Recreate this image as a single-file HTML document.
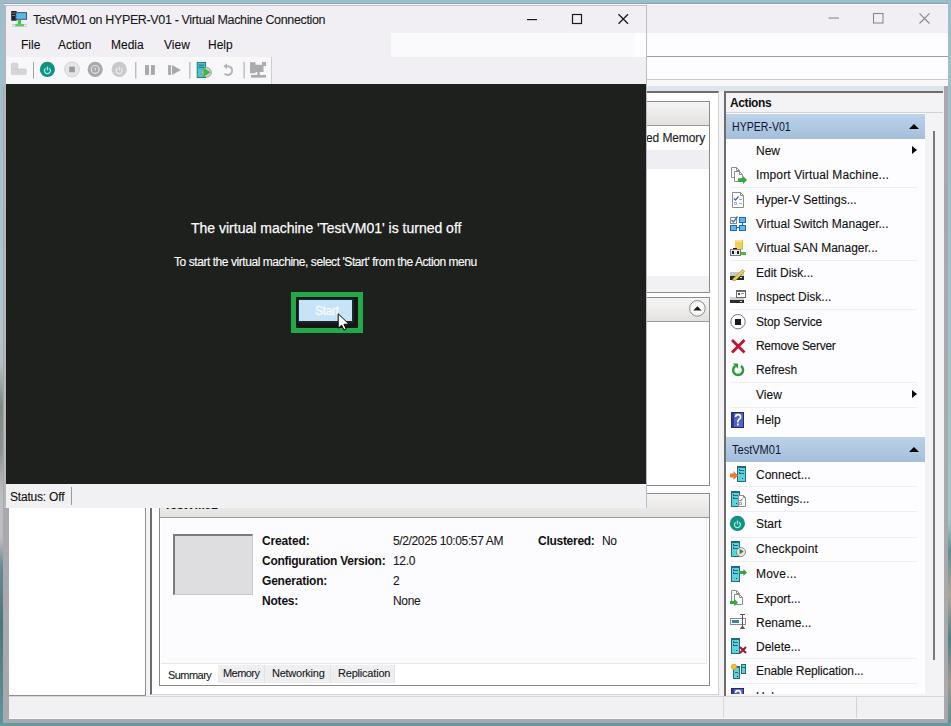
<!DOCTYPE html>
<html><head><meta charset="utf-8">
<style>
*{margin:0;padding:0;box-sizing:border-box}
html,body{width:951px;height:726px;overflow:hidden;background:#6f9aa3;font-family:"Liberation Sans",sans-serif;color:#000}
.a{position:absolute}
.t{position:absolute;white-space:nowrap;font-size:12px;line-height:14px;color:#111;-webkit-text-stroke:0.1px currentColor}
#desk-top{left:0;top:0;width:951px;height:8px;background:#9dbdcd}
#desk-left{left:0;top:0;width:4px;height:726px;background:linear-gradient(#9dbdcd 0%,#aac6d4 40%,#b4c0c4 50%,#7d8a80 56%,#8a9490 62%,#bcbec0 68%,#c2bcc0 74%,#6a8a94 78%,#4a7482 86%,#5e96a0 100%)}
#desk-right{left:948px;top:0;width:3px;height:726px;background:linear-gradient(#9dbdcd 0%,#a6c2d0 72%,#5e9098 76%,#b0a890 82%,#4e8088 88%,#a09a88 94%,#5a9098 100%)}
#desk-bot{left:0;top:723px;width:951px;height:3px;background:#5e9aa0}
#bw{left:3px;top:86px;width:945px;height:637px;background:#a9a8ac}
#bw-title{left:4px;top:3px;width:944px;height:30px;background:#f1eff4;border-top:1px solid #8fa2ae;box-shadow:inset 0 1px 0 #fbfbfd}
#bw-menu{left:4px;top:33px;width:944px;height:24px;background:#fdfcfe;border-bottom:1px solid #a0a0a2}
#bw-tool{left:4px;top:57px;width:944px;height:23px;background:#fdfcfe;border-bottom:1px solid #c8c8ca}
#bw-strip{left:4px;top:80px;width:944px;height:6px;background:#f8f7fa}
#bw-body{left:9px;top:86px;width:935px;height:610px;background:linear-gradient(#dde5ee 0px,#dde5ee 5px,#f3f2f5 5px)}
#bw-status{left:9px;top:696px;width:935px;height:23px;background:#f1f0f3;border-top:1px solid #d6d6d6;border-bottom:1px solid #fafafa}
#tree{left:9px;top:91px;width:137px;height:605px;background:#fff;border-right:1px solid #8f8f8f;border-bottom:1px solid #8f8f8f}
#mid{left:150px;top:91px;width:569px;height:604px;background:#fff;border-left:2px solid #6d6d6d;border-top:2px solid #6d6d6d;border-right:1px solid #d4d4d6;border-bottom:1px solid #d4d4d6}
.pane{position:absolute;background:#fff;border:1px solid #8c8c8c}
.phead{position:absolute;left:0;top:0;right:0;height:24px;background:linear-gradient(#f6f5f5,#e4e2df);border-bottom:1px solid #9c9c9c}
#actions{left:724px;top:91px;width:219px;height:605px;background:#f3f2f5;border-left:2px solid #6d6d6d;border-top:2px solid #6d6d6d}
.ahead{left:726px;width:199px;height:25px;background:linear-gradient(#bcd2ea,#a4bedb)}
.tri-up{width:0;height:0;border-left:5px solid transparent;border-right:5px solid transparent;border-bottom:5px solid #000}
.tri-r{width:0;height:0;border-top:4.5px solid transparent;border-bottom:4.5px solid transparent;border-left:5px solid #000}
.sep{left:731px;width:186px;height:1px;background:#eeeef0}
.b{font-weight:bold;color:#111;-webkit-text-stroke:0}
.v{color:#1a1a1a}
.tab{font-size:11px;color:#1a1a1a}
</style></head><body>
<div class="a" id="desk-top"></div>
<div class="a" id="desk-left"></div>
<div class="a" id="desk-right"></div>
<div class="a" id="desk-bot"></div>
<div class="a" id="bw"></div>
<div class="a" id="bw-title"></div>
<div class="a" id="bw-menu"></div>
<div class="a" id="bw-tool"></div>
<div class="a" id="bw-strip"></div>
<div class="a" id="bw-body"></div>
<div class="a" id="bw-status"></div>
<svg class="a" style="left:820px;top:8px" width="120" height="22">
  <rect x="8.5" y="9.5" width="10.5" height="1.1" fill="#8a8a8c"/>
  <rect x="53.5" y="5.5" width="9.5" height="9.5" fill="none" stroke="#8a8a8c" stroke-width="1.1"/>
  <path d="M99.5 5.3 L109.5 15.5 M109.5 5.3 L99.5 15.5" stroke="#8a8a8c" stroke-width="1.2"/>
</svg>
<div class="a" style="left:723px;top:697px;width:1px;height:21px;background:#d8d8da"></div>
<div class="a" style="left:856px;top:697px;width:1px;height:21px;background:#d4d4d6"></div>
<div class="a" id="tree"></div>
<div class="a" id="mid">
  <!-- table pane -->
  <div class="pane" style="left:-2px;top:8px;width:560px;height:192px">
    <div class="phead"></div>
  </div>
  <!-- checkpoint pane -->
  <div class="pane" style="left:-2px;top:204px;width:560px;height:189px">
    <div class="phead"></div>
  </div>
  <!-- details pane -->
  <div class="pane" style="left:7px;top:400px;width:551px;height:193px">
    <div class="phead"></div>
  </div>
</div>
<div class="a" id="actions"></div>
<div class="t" style="left:646px;top:131px;letter-spacing:-0.1px;color:#1a1a1a">ed Memory</div>
<div class="a" style="left:620px;top:150px;width:89px;height:19px;background:#efeef2"></div>
<div class="a" style="left:620px;top:276px;width:89px;height:16px;background:#f1f0f3"></div>
<svg class="a" style="left:687px;top:298px" width="20" height="22"><circle cx="10.4" cy="10.4" r="7.8" fill="#fafafa" stroke="#7a7a7a" stroke-width="0.9"/><path d="M6.2 12.4 L10.4 8.2 L14.6 12.4 Z" fill="#1a1a1a"/></svg>
<div class="t" style="left:164px;top:498px;font-weight:bold;letter-spacing:-0.2px">TestVM01</div>
<div class="a" style="left:161px;top:518px;width:546px;height:146px;background:#fcfbfd;border-bottom:1px solid #e6e6e8;border-right:1px solid #ececee"></div>
<div class="a" style="left:173px;top:534px;width:80px;height:61px;background:#dedddf;border-top:2px solid #7c7c7e;border-left:2px solid #7c7c7e;border-right:1px solid #c8c8ca;border-bottom:1px solid #c8c8ca"></div>
<div class="t b" style="left:262px;top:534px;letter-spacing:-0.15px">Created:</div>
<div class="t b" style="left:262px;top:554px;letter-spacing:-0.27px">Configuration Version:</div>
<div class="t b" style="left:262px;top:574px;letter-spacing:-0.2px">Generation:</div>
<div class="t b" style="left:262px;top:594px;letter-spacing:-0.2px">Notes:</div>
<div class="t v" style="left:393px;top:534px;letter-spacing:-0.37px">5/2/2025 10:05:57 AM</div>
<div class="t v" style="left:393px;top:554px;letter-spacing:-0.3px">12.0</div>
<div class="t v" style="left:393px;top:574px">2</div>
<div class="t v" style="left:393px;top:594px;letter-spacing:-0.3px">None</div>
<div class="t b" style="left:538px;top:534px;letter-spacing:-0.28px">Clustered:</div>
<div class="t v" style="left:602px;top:534px;letter-spacing:-0.3px">No</div>
<div class="a" style="left:218px;top:665px;width:47px;height:18px;background:#efeef1;border-right:1px solid #e2e2e4"></div>
<div class="a" style="left:265px;top:665px;width:66px;height:18px;background:#efeef1;border-right:1px solid #e2e2e4"></div>
<div class="a" style="left:331px;top:665px;width:64px;height:18px;background:#efeef1;border-right:1px solid #e2e2e4"></div>
<div class="t tab" style="left:168px;top:668px;letter-spacing:-0.55px">Summary</div>
<div class="t tab" style="left:223px;top:666px;letter-spacing:-0.55px">Memory</div>
<div class="t tab" style="left:272px;top:666px;letter-spacing:-0.25px">Networking</div>
<div class="t tab" style="left:338px;top:666px;letter-spacing:-0.2px">Replication</div>
<div class="a" style="left:726px;top:93px;width:217px;height:20px;background:#f3f2f5;border-bottom:1px solid #d2d2d2"></div>
<div class="t" style="left:730px;top:96px;font-weight:bold;letter-spacing:-0.4px;-webkit-text-stroke:0">Actions</div>
<div class="a" id="alist" style="left:726px;top:113px;width:199px;height:581px;background:#fdfcfe;overflow:hidden"></div>
<div class="a" style="left:933px;top:131px;width:2px;height:529px;background:#7a7a7a"></div>
<div class="a ahead" style="top:114px"></div>
<div class="t" style="left:732px;top:120px;transform:scaleX(0.88);transform-origin:0 0;-webkit-text-stroke:0;color:#0c1830">HYPER-V01</div>
<div class="a tri-up" style="left:909px;top:124px"></div>
<div class="a ahead" style="top:437px"></div>
<div class="t" style="left:732px;top:443px;transform:scaleX(0.92);transform-origin:0 0;-webkit-text-stroke:0;color:#0c1830">TestVM01</div>
<div class="a tri-up" style="left:909px;top:447px"></div>
<div class="a tri-r" style="left:912px;top:146px"></div>
<div class="a tri-r" style="left:912px;top:390px"></div>
<!--ICONSVG--><svg class="a" style="left:726px;top:113px" width="24" height="581" viewBox="726 113 24 581"><path d="M731.5 167.5 H736.5 L739.5 170.5 V177.5 H731.5 Z" fill="#fff" stroke="#8c8c8c" stroke-width="1"/><path d="M736.5 167.5 V170.5 H739.5" fill="none" stroke="#8c8c8c" stroke-width="1"/><path d="M734.5 171.5 H739.5 L742.5 174.5 V181.5 H734.5 Z" fill="#fff" stroke="#8c8c8c" stroke-width="1"/><path d="M739.5 171.5 V174.5 H742.5" fill="none" stroke="#8c8c8c" stroke-width="1"/><path d="M738 178.24 H743.0 V176 L747 180.0 L743.0 184 V181.76 H738 Z" fill="#2faa3c"/><path d="M732.5 192.5 H740.5 L743.5 195.5 V207.5 H732.5 Z" fill="#fff" stroke="#8c8c8c" stroke-width="1"/><path d="M740.5 192.5 V195.5 H743.5" fill="none" stroke="#8c8c8c" stroke-width="1"/><path d="M734 198.5 L735.5 200 L738.5 196.5" fill="none" stroke="#3566b8" stroke-width="1.2"/><rect x="739" y="199" width="3" height="1" fill="#a8a8a8" /><rect x="734.5" y="202.5" width="2" height="2" fill="none" stroke="#b4b4b4" stroke-width="1"/><rect x="739" y="203" width="3" height="1" fill="#a8a8a8" /><rect x="730.5" y="217.5" width="6" height="6" fill="#fff" stroke="#8c8c8c" stroke-width="1"/><path d="M731.5 220 L733.5 222 L737.5 216.5" fill="none" stroke="#3270c0" stroke-width="1.3"/><rect x="739.5" y="217.5" width="6" height="5" fill="#5ab8f2" stroke="#1e6ab4" stroke-width="1"/><rect x="730.5" y="225.5" width="6" height="5" fill="#5ab8f2" stroke="#1e6ab4" stroke-width="1"/><rect x="739.5" y="225.5" width="6" height="5" fill="#5ab8f2" stroke="#1e6ab4" stroke-width="1"/><rect x="742" y="223" width="1" height="2" fill="#1e6ab4" /><rect x="737" y="227" width="2" height="1" fill="#1e6ab4" /><rect x="735" y="240" width="8" height="10" fill="#f0d058" /><rect x="735" y="240" width="8" height="2" fill="#f8e490" /><rect x="742" y="240" width="1" height="10" fill="#d8b840" /><rect x="730.5" y="249.5" width="10" height="6" fill="#e8e8e8" stroke="#7a7a7a" stroke-width="1"/><rect x="732" y="251" width="2" height="3" fill="#1a1a1a" /><rect x="737" y="251" width="2" height="3" fill="#1a1a1a" /><rect x="733" y="248" width="4" height="1" fill="#1a1a1a" /><rect x="741" y="252" width="5" height="3" fill="#48b848" /><rect x="730" y="272" width="14" height="4" fill="#c8c8c8" /><rect x="730" y="276" width="14" height="4" fill="#2a2a2a" /><rect x="740" y="277" width="2" height="1" fill="#e0f0d0" /><path d="M732.6 280.4 L735.4 280.6 L744.6 271.4 L742.6 269.4 L733.2 278.6 Z" fill="#e8c860" stroke="#a88a30" stroke-width="0.6"/><rect x="730" y="297" width="14" height="3" fill="#cfcfcf" /><rect x="730" y="300" width="14" height="3" fill="#2a2a2a" /><rect x="740" y="301" width="2" height="1" fill="#e8e8e8" /><rect x="736.5" y="290.5" width="9" height="7" fill="#fff" stroke="#6a6a6a" stroke-width="1"/><rect x="736" y="290" width="10" height="2" fill="#6a6a6a" /><rect x="738" y="293" width="2" height="2" fill="#444" /><rect x="741" y="293" width="3" height="1" fill="#888" /><circle cx="738" cy="321.7" r="7.2" fill="#fff" stroke="#7a7a7a" stroke-width="1"/><rect x="735" y="319" width="6" height="6" fill="#1a1a1a" /><path d="M732 340 L744.5 352.5 M744.5 340 L732 352.5" stroke="#c8102e" stroke-width="2.8"/><path d="M735.3 365.9 A5 5 0 1 0 740.9 365.9" fill="none" stroke="#2a9a3a" stroke-width="2.4"/><path d="M732.8 363.6 L738 363.6 L738 368.8 Z" fill="#2a9a3a"/><rect x="731" y="412" width="13" height="16" fill="#5464c4"/><rect x="731" y="412" width="3" height="16" fill="#2c3a94"/><rect x="731.5" y="412.5" width="12" height="15" fill="none" stroke="#202a70" stroke-width="1"/><path d="M735.6 417 Q735.6 414.6 738 414.6 Q740.6 414.6 740.6 417 Q740.6 418.6 738.6 419.8 Q737.8 420.4 737.8 422.4" fill="none" stroke="#fff" stroke-width="1.6"/><rect x="737" y="423.6" width="1.8" height="1.8" fill="#fff"/><rect x="737.5" y="466.5" width="8" height="15" fill="#5fd0e0" stroke="#1d6d7a" stroke-width="1"/><rect x="737" y="466" width="9" height="2" fill="#1d6d7a" /><rect x="739" y="470" width="5" height="1" fill="#1d6d7a" /><rect x="739" y="469" width="1" height="1" fill="#1d6d7a" /><rect x="739" y="473" width="5" height="1" fill="#1d6d7a" /><rect x="739" y="472" width="1" height="1" fill="#1d6d7a" /><rect x="742" y="478" width="1" height="1" fill="#0e3a40" /><path d="M730 473.52 H733.5 V471 L738 475.5 L733.5 480 V477.48 H730 Z" fill="#e8782a"/><rect x="731.5" y="491.5" width="8" height="15" fill="#5fd0e0" stroke="#1d6d7a" stroke-width="1"/><rect x="731" y="491" width="9" height="2" fill="#1d6d7a" /><rect x="733" y="495" width="5" height="1" fill="#1d6d7a" /><rect x="733" y="494" width="1" height="1" fill="#1d6d7a" /><rect x="733" y="498" width="5" height="1" fill="#1d6d7a" /><rect x="733" y="497" width="1" height="1" fill="#1d6d7a" /><rect x="736" y="503" width="1" height="1" fill="#0e3a40" /><path d="M738.5 495.5 H743.5 L745.5 497.5 V506.5 H738.5 Z" fill="#fff" stroke="#8c8c8c" stroke-width="1"/><path d="M743.5 495.5 V497.5 H745.5" fill="none" stroke="#8c8c8c" stroke-width="1"/><path d="M739.5 500 L740.6 501.2 L742.6 498.6" fill="none" stroke="#3060b0" stroke-width="1"/><rect x="739.5" y="502.5" width="2" height="2" fill="none" stroke="#b0b0b0" stroke-width="1"/><circle cx="737.4" cy="523.4" r="7.6" fill="#17917f"/><path d="M735.6 522.2 A3 3 0 1 0 739.2 522.2" fill="none" stroke="#8ef6ec" stroke-width="1.3"/><rect x="736.8" y="520.6" width="1.3" height="3.8" fill="#8ef6ec" /><rect x="731.5" y="541.5" width="8" height="15" fill="#5fd0e0" stroke="#1d6d7a" stroke-width="1"/><rect x="731" y="541" width="9" height="2" fill="#1d6d7a" /><rect x="733" y="545" width="5" height="1" fill="#1d6d7a" /><rect x="733" y="544" width="1" height="1" fill="#1d6d7a" /><rect x="733" y="548" width="5" height="1" fill="#1d6d7a" /><rect x="733" y="547" width="1" height="1" fill="#1d6d7a" /><rect x="736" y="553" width="1" height="1" fill="#0e3a40" /><circle cx="741" cy="552" r="4.5" fill="#e4e4e4" stroke="#8a8a8a" stroke-width="0.9"/><path d="M739.6 549 L743.6 551.6 L739.6 554.2 Z" fill="#2a8a2a"/><rect x="731.5" y="566.5" width="8" height="15" fill="#5fd0e0" stroke="#1d6d7a" stroke-width="1"/><rect x="731" y="566" width="9" height="2" fill="#1d6d7a" /><rect x="733" y="570" width="5" height="1" fill="#1d6d7a" /><rect x="733" y="569" width="1" height="1" fill="#1d6d7a" /><rect x="733" y="573" width="5" height="1" fill="#1d6d7a" /><rect x="733" y="572" width="1" height="1" fill="#1d6d7a" /><rect x="736" y="578" width="1" height="1" fill="#0e3a40" /><path d="M739 570.96 H743.5 V569 L747 572.5 L743.5 576 V574.04 H739 Z" fill="#2faa3c"/><path d="M731.5 590.5 H736.5 L739.5 593.5 V601.5 H731.5 Z" fill="#fff" stroke="#8c8c8c" stroke-width="1"/><path d="M736.5 590.5 V593.5 H739.5" fill="none" stroke="#8c8c8c" stroke-width="1"/><path d="M734.5 594.5 H739.5 L742.5 597.5 V604.5 H734.5 Z" fill="#fff" stroke="#8c8c8c" stroke-width="1"/><path d="M739.5 594.5 V597.5 H742.5" fill="none" stroke="#8c8c8c" stroke-width="1"/><path d="M730 600.96 H734.5 V599 L738 602.5 L734.5 606 V604.04 H730 Z" fill="#2faa3c"/><rect x="730.5" y="618.5" width="15" height="6" fill="#fff" stroke="#8c8c8c" stroke-width="1"/><rect x="732" y="620" width="7" height="3" fill="#3a7cc8" /><rect x="742" y="615" width="1" height="12" fill="#555" /><rect x="740" y="614" width="5" height="1" fill="#555" /><path d="M739.8 629 L742.5 625.6 L745.2 629 Z" fill="#555"/><rect x="731.5" y="638.5" width="8" height="15" fill="#5fd0e0" stroke="#1d6d7a" stroke-width="1"/><rect x="731" y="638" width="9" height="2" fill="#1d6d7a" /><rect x="733" y="642" width="5" height="1" fill="#1d6d7a" /><rect x="733" y="641" width="1" height="1" fill="#1d6d7a" /><rect x="733" y="645" width="5" height="1" fill="#1d6d7a" /><rect x="733" y="644" width="1" height="1" fill="#1d6d7a" /><rect x="736" y="650" width="1" height="1" fill="#0e3a40" /><path d="M740 647 L746 653 M746 647 L740 653" stroke="#a01424" stroke-width="2"/><rect x="733.5" y="666.5" width="6" height="12" fill="#5fd0e0" stroke="#1d6d7a" stroke-width="1"/><rect x="733" y="666" width="7" height="2" fill="#1d6d7a" /><rect x="735" y="672" width="3" height="1" fill="#1d6d7a" /><rect x="737" y="676" width="1" height="1" fill="#0e3a40" /><rect x="741.5" y="664.5" width="4" height="9" fill="#5fd0e0" stroke="#1d6d7a" stroke-width="1"/><rect x="742" y="667" width="3" height="1" fill="#1d6d7a" /><circle cx="734" cy="666.8" r="2.7" fill="#f2c030" stroke="#d09a10" stroke-width="0.6"/><rect x="731" y="688" width="13" height="16" fill="#5464c4"/><rect x="731" y="688" width="3" height="16" fill="#2c3a94"/><rect x="731.5" y="688.5" width="12" height="15" fill="none" stroke="#202a70" stroke-width="1"/><path d="M735.6 693 Q735.6 690.6 738 690.6 Q740.6 690.6 740.6 693 Q740.6 694.6 738.6 695.8 Q737.8 696.4 737.8 698.4" fill="none" stroke="#fff" stroke-width="1.6"/><rect x="737" y="699.6" width="1.8" height="1.8" fill="#fff"/></svg>
<div id="acl" class="a" style="left:0;top:0;width:951px;height:694px;overflow:hidden">
<div class="t" style="left:756px;top:144px">New</div>
<div class="t" style="left:756px;top:168px;letter-spacing:0.12px">Import Virtual Machine...</div>
<div class="t" style="left:756px;top:193px">Hyper-V Settings...</div>
<div class="t" style="left:756px;top:217px">Virtual Switch Manager...</div>
<div class="t" style="left:756px;top:241px">Virtual SAN Manager...</div>
<div class="t" style="left:756px;top:266px">Edit Disk...</div>
<div class="t" style="left:756px;top:290px">Inspect Disk...</div>
<div class="t" style="left:756px;top:315px;letter-spacing:-0.17px">Stop Service</div>
<div class="t" style="left:756px;top:339px;letter-spacing:-0.3px">Remove Server</div>
<div class="t" style="left:756px;top:363px;letter-spacing:-0.15px">Refresh</div>
<div class="t" style="left:756px;top:388px">View</div>
<div class="t" style="left:756px;top:413px">Help</div>
<div class="t" style="left:756px;top:468px">Connect...</div>
<div class="t" style="left:756px;top:492px">Settings...</div>
<div class="t" style="left:756px;top:517px">Start</div>
<div class="t" style="left:756px;top:542px;letter-spacing:0.2px">Checkpoint</div>
<div class="t" style="left:756px;top:567px;letter-spacing:0.2px">Move...</div>
<div class="t" style="left:756px;top:592px">Export...</div>
<div class="t" style="left:756px;top:616px">Rename...</div>
<div class="t" style="left:756px;top:640px">Delete...</div>
<div class="t" style="left:756px;top:664px;letter-spacing:-0.12px">Enable Replication...</div>
<div class="t" style="left:756px;top:690px">Help</div>
<div class="a sep" style="top:187px"></div>
<div class="a sep" style="top:260px"></div>
<div class="a sep" style="top:309px"></div>
<div class="a sep" style="top:382px"></div>
<div class="a sep" style="top:407px"></div>
<div class="a sep" style="top:486px"></div>
<div class="a sep" style="top:511px"></div>
<div class="a sep" style="top:537px"></div>
<div class="a sep" style="top:561px"></div>
<div class="a sep" style="top:658px"></div>
<div class="a sep" style="top:683px"></div>
</div>
<div class="a" id="vm" style="left:4px;top:5px;width:643px;height:503px;background:#f1eff4;border:1px solid #b9bec6;border-left:2px solid #b4b6ba;border-bottom-color:#c8c8cc"></div>
<div class="a" style="left:391px;top:33px;width:255px;height:24px;background:linear-gradient(90deg,#faf9fc 0,#faf9fc 244px,#fefefe 244px)"></div>
<div class="a" style="left:6px;top:57px;width:266px;height:27px;background:#f8f7fa;border-right:1px solid #d4d4d6"></div>
<svg class="a" style="left:10px;top:10px" width="20" height="18" viewBox="0 0 20 18">
  <rect x="1.2" y="1" width="5.5" height="9.7" fill="#222"/>
  <rect x="2" y="2.5" width="3" height="1" fill="#777"/><rect x="2" y="5" width="3" height="1" fill="#777"/>
  <rect x="5.3" y="2.1" width="11.7" height="7.7" fill="#2a5a78"/>
  <rect x="6.3" y="3.1" width="9.7" height="5.7" fill="#5cb6ee"/>
  <rect x="7.8" y="9.8" width="3.2" height="4.2" fill="#4cc04c"/>
  <rect x="2" y="14.2" width="15" height="1" fill="#c8c8c8"/>
  <rect x="5.3" y="13.9" width="8.7" height="2.7" fill="#5ccc5c"/>
  <rect x="2" y="16" width="15" height="0.8" fill="#c8c8c8"/>
</svg>
<div class="t" style="left:33px;top:13px;font-size:12.5px;letter-spacing:-0.35px;color:#1a1a1a">TestVM01 on HYPER-V01 - Virtual Machine Connection</div>
<svg class="a" style="left:520px;top:10px" width="120" height="18">
  <rect x="7" y="9" width="10" height="1.2" fill="#1a1a1a"/>
  <rect x="52.5" y="4.5" width="9" height="9" fill="none" stroke="#1a1a1a" stroke-width="1.2"/>
  <path d="M98.5 4.3 L108 13.8 M108 4.3 L98.5 13.8" stroke="#1a1a1a" stroke-width="1.3"/>
</svg>
<div class="t" style="left:21px;top:38px">File</div>
<div class="t" style="left:58px;top:38px">Action</div>
<div class="t" style="left:111px;top:38px">Media</div>
<div class="t" style="left:164px;top:38px">View</div>
<div class="t" style="left:208px;top:38px">Help</div>
<svg class="a" style="left:6px;top:57px" width="270" height="27" viewBox="6 57 270 27">
  <g fill="#d6d6d8" stroke="#c4c4c6" stroke-width="0.6">
    <rect x="11.3" y="63.3" width="6.6" height="5.8" rx="1"/>
    <rect x="11.3" y="69" width="7.2" height="5.6" rx="1"/>
    <rect x="18.6" y="69" width="7.6" height="5.6" rx="1"/>
  </g>
  <rect x="33" y="62" width="1" height="16.5" fill="#a4a4a4"/>
  <circle cx="47.4" cy="69.4" r="7.6" fill="#17917f"/>
  <path d="M45.6 68.2 A3 3 0 1 0 49.2 68.2" fill="none" stroke="#8ef6ec" stroke-width="1.3"/>
  <rect x="46.8" y="66.6" width="1.3" height="3.8" fill="#8ef6ec"/>
  <circle cx="72" cy="69.4" r="7.4" fill="#e6e5e8" stroke="#cdcdcf" stroke-width="0.9"/>
  <rect x="69.2" y="66.6" width="5.7" height="5.7" fill="#9c9c9e"/>
  <circle cx="95.2" cy="69.4" r="7.6" fill="#a9a9ab"/>
  <circle cx="95.2" cy="69.4" r="3.9" fill="none" stroke="#e4e4e6" stroke-width="1.2"/>
  <rect x="94.6" y="67.6" width="1.2" height="2.8" fill="#e4e4e6"/>
  <circle cx="119.2" cy="69.4" r="7.6" fill="#c9c9cb"/>
  <path d="M117.4 68.2 A3 3 0 1 0 121 68.2" fill="none" stroke="#ececee" stroke-width="1.2"/>
  <rect x="118.6" y="66.6" width="1.2" height="3.8" fill="#ececee"/>
  <rect x="135.3" y="62" width="1" height="16.5" fill="#a4a4a4"/>
  <rect x="145" y="65.1" width="4" height="9.8" fill="#a9a9ab"/>
  <rect x="150.9" y="65.1" width="4" height="9.8" fill="#a9a9ab"/>
  <rect x="168.1" y="65.1" width="2.9" height="9.8" fill="#a9a9ab"/>
  <path d="M172 65.1 L181 70 L172 74.9 Z" fill="#a9a9ab"/>
  <rect x="189.4" y="62" width="1" height="16.5" fill="#a4a4a4"/>
  <rect x="197.2" y="62.4" width="8.4" height="15.2" fill="#4cc3d3" stroke="#1f6f7c" stroke-width="0.9"/>
  <rect x="198.6" y="64.6" width="5.6" height="1" fill="#1f6f7c"/>
  <rect x="198.6" y="66.8" width="5.6" height="1" fill="#1f6f7c"/>
  <circle cx="206.6" cy="72.4" r="4.8" fill="#cfcfcf" stroke="#777" stroke-width="0.6"/>
  <path d="M203.3 67.8 L210.6 72.3 L203.3 76.9 Z" fill="#3cb83c"/>
  <path d="M225.2 66.2 L228.2 66.2 A4.4 4.4 0 1 1 224.6 73.6" fill="none" stroke="#b4b4b6" stroke-width="2"/>
  <path d="M223.4 66.2 L227 63.2 L227 69.2 Z" fill="#b4b4b6"/>
  <rect x="243.6" y="62" width="1" height="16.5" fill="#a4a4a4"/>
  <g fill="#ababad">
    <rect x="250" y="62.2" width="5.5" height="11"/>
    <rect x="254.5" y="64.8" width="9" height="7.2"/>
    <rect x="262" y="62" width="4" height="4"/>
    <rect x="257.3" y="72" width="2.4" height="3"/>
    <rect x="251" y="75" width="15" height="2.6"/>
  </g>
  <rect x="271" y="57" width="1" height="27" fill="#d0d0d2"/>
</svg>

<div class="a" style="left:6px;top:84px;width:640px;height:400px;background:#1e201e"></div>
<div class="a" style="left:6px;top:484px;width:640px;height:24px;background:#f1f0f3"></div>
<div class="t" style="left:10px;top:490px;letter-spacing:-0.2px">Status: Off</div>
<div class="a" style="left:71px;top:487px;width:1px;height:18px;background:#9a9a9a"></div>
<div class="t" style="left:191px;top:221px;font-size:14px;color:#fafafa;-webkit-text-stroke:0.25px #fafafa">The virtual machine 'TestVM01' is turned off</div>
<div class="t" style="left:174px;top:255px;font-size:12px;letter-spacing:-0.44px;color:#fafafa;-webkit-text-stroke:0.15px #fafafa">To start the virtual machine, select 'Start' from the Action menu</div>
<div class="a" style="left:291px;top:292px;width:72px;height:41px;border:5px solid #23a84a;background:#141614"></div>
<div class="a" style="left:298px;top:299px;width:56px;height:24px;background:#c6e3f7;border:1px solid #1b2c3a;border-right:2px solid #1b2632;border-bottom:2px solid #1b2632"></div>
<div class="t" style="left:315px;top:304px;font-size:12px;letter-spacing:-0.3px;color:#fafcff;-webkit-text-stroke:0.3px #fafcff">Start</div>
<svg class="a" style="left:337px;top:313px" width="15" height="18" viewBox="0 0 15 18">
  <path d="M1.2 0.8 L1.2 15.2 L4.6 12.2 L7 17 L9.2 16 L6.9 11.3 L12 11.2 Z" fill="#fff" stroke="#000" stroke-width="1"/>
</svg>


</body></html>
